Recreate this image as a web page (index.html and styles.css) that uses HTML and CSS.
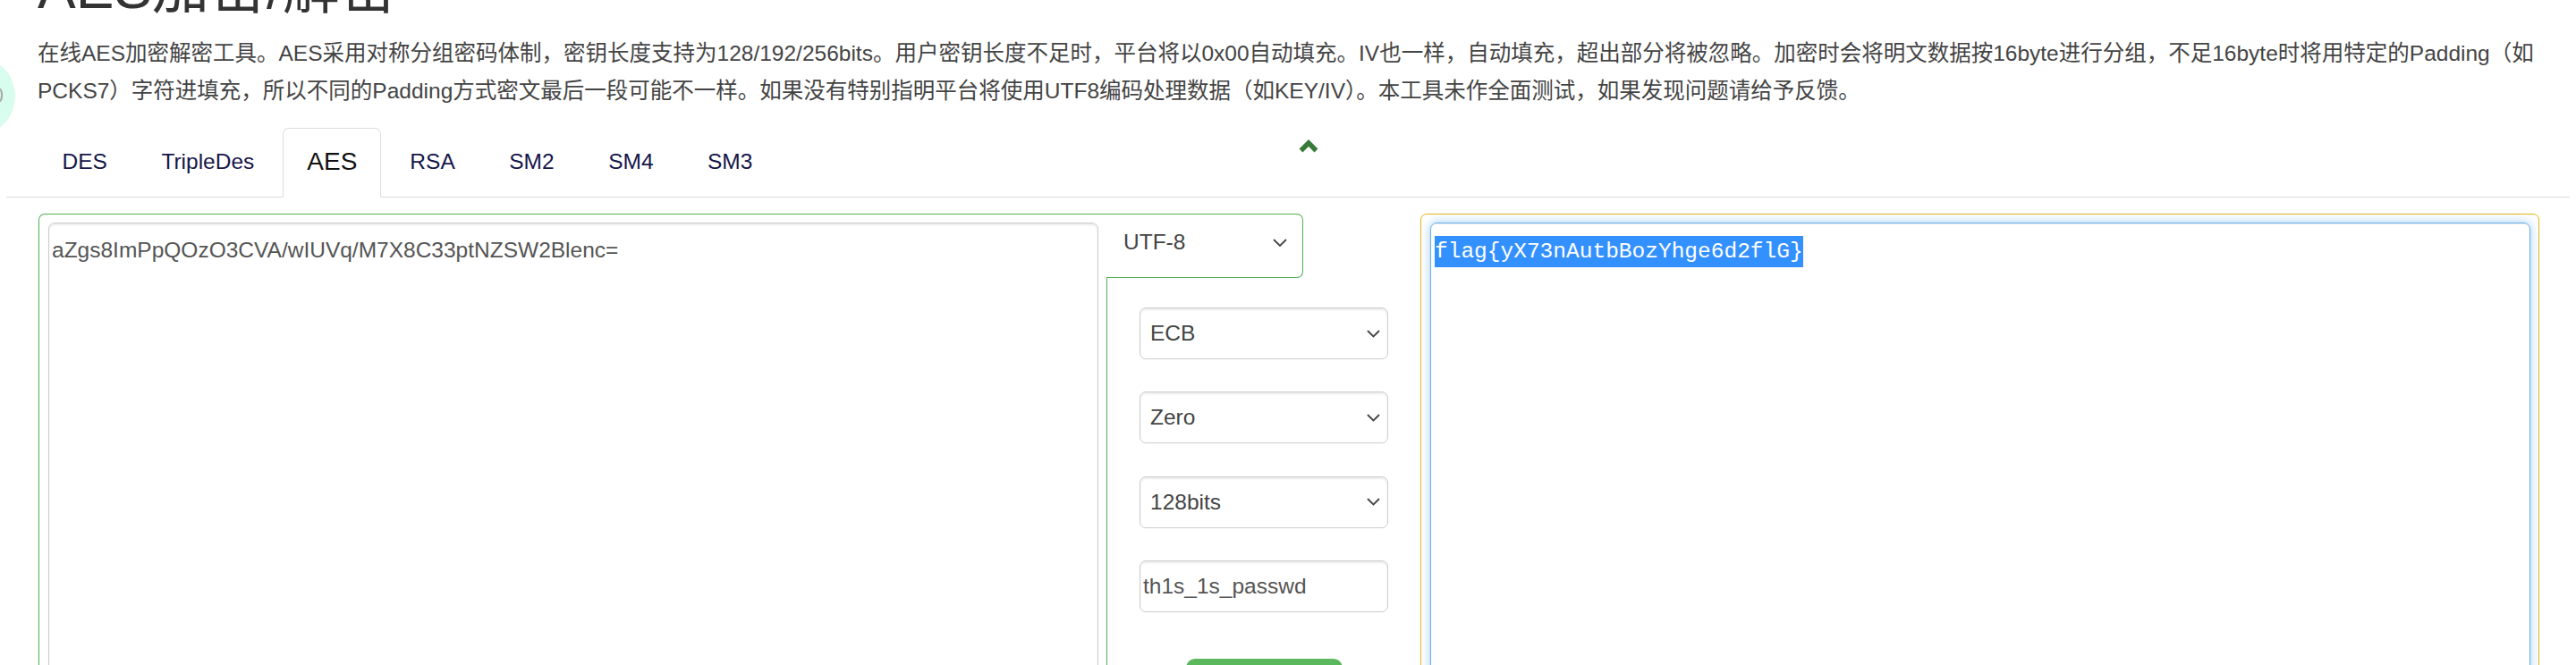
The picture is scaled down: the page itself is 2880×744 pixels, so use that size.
FILE: index.html
```html
<!DOCTYPE html>
<html lang="zh-CN">
<head>
<meta charset="utf-8">
<title>AES加密/解密</title>
<link rel="stylesheet" href="styles.css">
</head>
<body>
<div class="float-btn"><span class="float-glyph">0</span></div>
<div class="page">
  <h1 class="title">AES加密/解密</h1>
  <p class="desc">在线AES加密解密工具。AES采用对称分组密码体制，密钥长度支持为128/192/256bits。用户密钥长度不足时，平台将以0x00自动填充。IV也一样，自动填充，超出部分将被忽略。加密时会将明文数据按16byte进行分组，不足16byte时将用特定的Padding（如PCKS7）字符进填充，所以不同的Padding方式密文最后一段可能不一样。如果没有特别指明平台将使用UTF8编码处理数据（如KEY/IV）。本工具未作全面测试，如果发现问题请给予反馈。</p>
  <div class="tabs">
    <a class="tab">DES</a>
    <a class="tab">TripleDes</a>
    <a class="tab active">AES</a>
    <a class="tab">RSA</a>
    <a class="tab">SM2</a>
    <a class="tab">SM4</a>
    <a class="tab">SM3</a>
    <span class="toggle"><svg width="24" height="16" viewBox="0 0 24 16"><polyline points="3.5,13.5 12,5 20.5,13.5" fill="none" stroke="#387a3a" stroke-width="5.5"/></svg></span>
  </div>
  <div class="workbench">
    <div class="src-card">
      <div class="textbox">aZgs8ImPpQOzO3CVA/wIUVq/M7X8C33ptNZSW2Blenc=</div>
    </div>
    <div class="mid">
      <div class="enc">
        <span>UTF-8</span>
        <svg class="caret" width="16" height="9" viewBox="0 0 16 9"><polyline points="1,1 8,8 15,1" fill="none" stroke="#444" stroke-width="1.8"/></svg>
      </div>
      <div class="opts">
        <div class="select"><span>ECB</span><svg class="caret" width="15" height="9" viewBox="0 0 15 9"><polyline points="1,1 7.5,7.5 14,1" fill="none" stroke="#444" stroke-width="1.8"/></svg></div>
        <div class="select"><span>Zero</span><svg class="caret" width="15" height="9" viewBox="0 0 15 9"><polyline points="1,1 7.5,7.5 14,1" fill="none" stroke="#444" stroke-width="1.8"/></svg></div>
        <div class="select"><span>128bits</span><svg class="caret" width="15" height="9" viewBox="0 0 15 9"><polyline points="1,1 7.5,7.5 14,1" fill="none" stroke="#444" stroke-width="1.8"/></svg></div>
        <div class="select input"><span>th1s_1s_passwd</span></div>
        <button class="btn-go">解密</button>
      </div>
    </div>
    <div class="out-card">
      <div class="textbox out"><span class="sel">flag{yX73nAutbBozYhge6d2flG}</span></div>
    </div>
  </div>
</div>
</body>
</html>
```
FILE: styles.css
```css
html, body {
  margin: 0;
  background: #fff;
  overflow: hidden;
}
body {
  font-family: "Liberation Sans", Arial, "Noto Sans CJK SC", sans-serif;
  font-size: 24.5px;
  color: #333;
}
.float-btn {
  position: fixed;
  left: -72px;
  top: 63px;
  width: 89px;
  height: 89px;
  border-radius: 50%;
  background: #d8fcee;
}
.float-glyph {
  position: absolute;
  right: 13px;
  top: 30px;
  font-size: 24px;
  line-height: 28px;
  color: #aaa;
}
.page {
  display: flow-root;
  padding: 0 7px;
}
.title {
  margin: -51px 0 0 35px;
  font-size: 64px;
  line-height: 76px;
  font-weight: normal;
  color: #333;
  white-space: nowrap;
}
.desc {
  margin: 14px 0 20px 35px;
  line-height: 42px;
  color: #444;
}
.tabs {
  display: flex;
  align-items: flex-start;
  border-bottom: 1px solid #ddd;
  padding-left: 34px;
}
.tab {
  display: block;
  padding: 16px 27.5px 18px;
  line-height: 42px;
  border: 1px solid transparent;
  border-radius: 7px 7px 0 0;
  margin: 0 3.5px -1px 0;
  color: #16164a;
  text-decoration: none;
}
.tab.active {
  font-size: 28px;
  padding: 16px 26px 18px;
  color: #111;
  border-color: #ddd;
  border-bottom-color: #fff;
  background: #fff;
}
.toggle {
  display: flex;
  margin: 12px 0 0 578px;
}
.workbench {
  display: flex;
  align-items: flex-start;
  margin-top: 18px;
  padding: 0 34px 0 36px;
}
.src-card {
  flex: none;
  width: 1194px;
  box-sizing: border-box;
  height: 700px;
  border: 1px solid #4fb04f;
  border-right: none;
  border-radius: 7px 0 0 0;
  padding: 9px 9px 0 10px;
}
.textbox {
  height: 640px;
  border: 1px solid #ccc;
  border-radius: 7px;
  box-shadow: inset 0 2px 2px rgba(0, 0, 0, 0.075);
  padding: 12px 3px;
  line-height: 35px;
  color: #555;
}
.mid {
  flex: none;
  width: 315px;
  margin-right: 36px;
  display: flex;
  flex-direction: column;
  align-items: flex-start;
}
.enc {
  width: 220px;
  height: 72px;
  box-sizing: border-box;
  border: 1px solid #4fb04f;
  border-left: none;
  border-radius: 0 7px 7px 0;
  padding: 13px 17px 0 19px;
  display: flex;
  justify-content: space-between;
  align-items: flex-start;
  line-height: 35px;
  color: #444;
}
.enc .caret {
  margin-top: 14px;
}
.opts {
  width: 315px;
  box-sizing: border-box;
  height: 600px;
  border-left: 1px solid #4fb04f;
  padding: 33px 0 0 36px;
  display: flex;
  flex-direction: column;
  align-items: flex-start;
}
.select {
  width: 278px;
  height: 58px;
  box-sizing: border-box;
  flex: none;
  border: 1px solid #ccc;
  border-radius: 7px;
  box-shadow: inset 0 2px 2px rgba(0, 0, 0, 0.075);
  display: flex;
  align-items: center;
  justify-content: space-between;
  padding: 0 8px 0 11px;
  margin-bottom: 36.3px;
  color: #444;
}
.select.input {
  padding-left: 3px;
  margin-bottom: 0;
  color: #555;
}
.btn-go {
  display: block;
  flex: none;
  width: 175px;
  height: 58px;
  margin: 52px 0 0 52px;
  border: none;
  border-radius: 10px;
  background: #5cb85c;
  color: #fff;
  font: inherit;
}
.out-card {
  flex: 1;
  height: 700px;
  border: 1px solid #e6b70f;
  border-radius: 7px 7px 0 0;
  padding: 9px 9px 0 10px;
}
.textbox.out {
  border-color: #66afe9;
  box-shadow: inset 0 1px 1px rgba(0, 0, 0, 0.075), 0 0 12px rgba(102, 175, 233, 0.6);
  padding: 12px 4px;
}
.sel {
  display: inline-block;
  font-family: "Liberation Mono", "Courier New", monospace;
  line-height: 35px;
  background: #3390ff;
  color: #fff;
}
```
